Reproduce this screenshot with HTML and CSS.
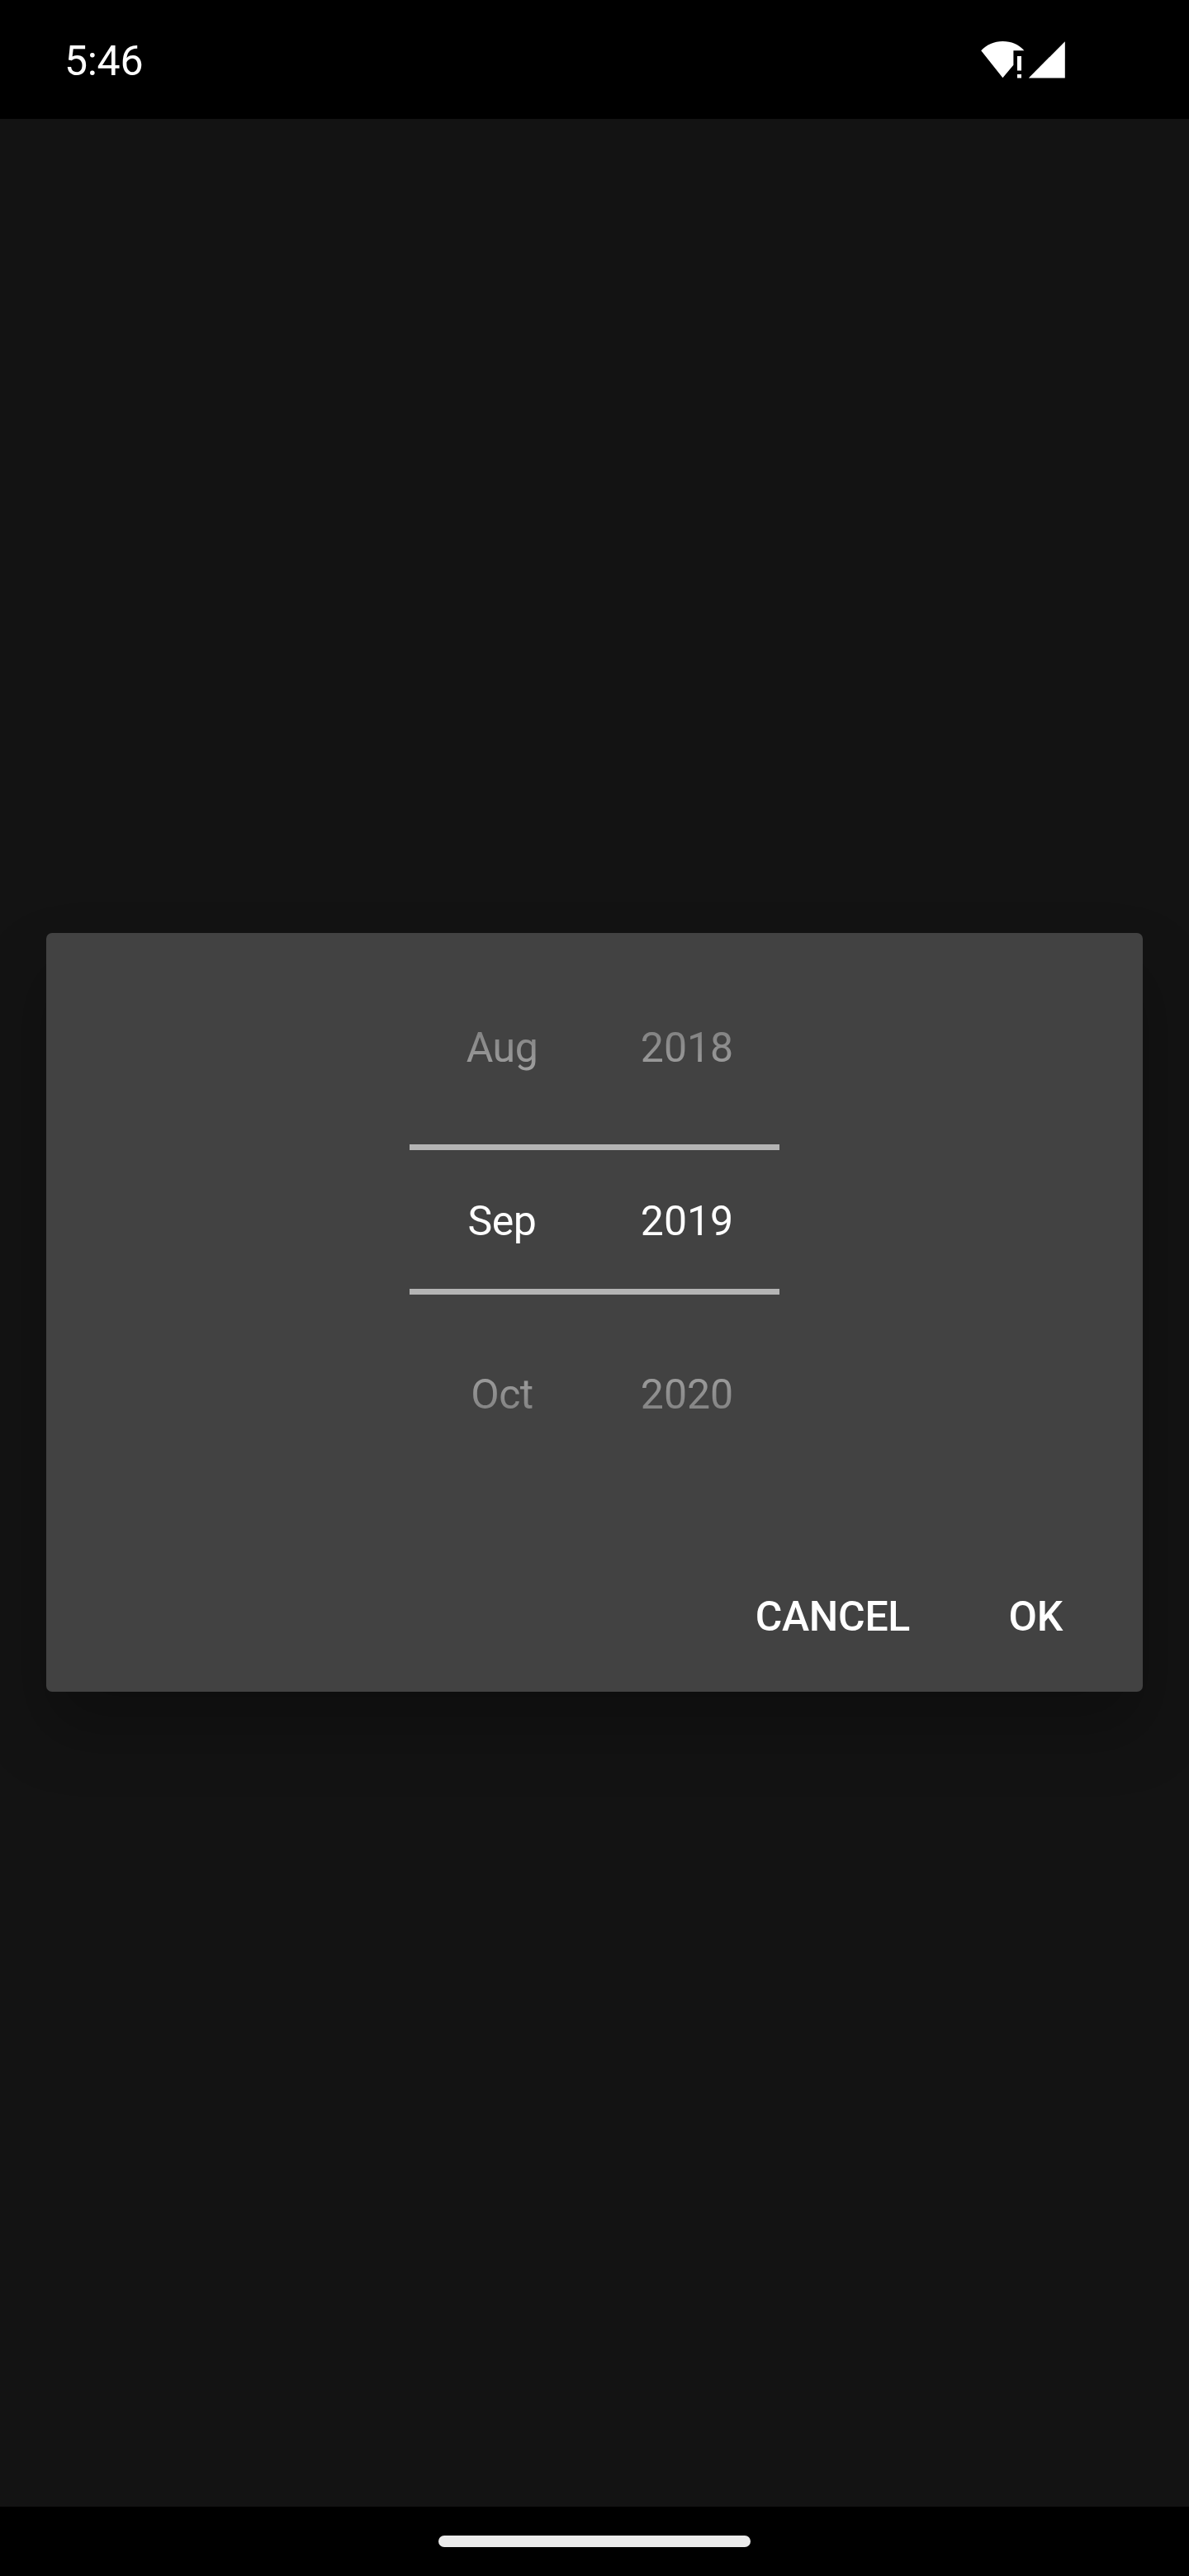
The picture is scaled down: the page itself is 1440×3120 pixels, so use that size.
FILE: index.html
```html
<!DOCTYPE html>
<html lang="en">
<head>
<meta charset="utf-8">
<title>Select month</title>
<link rel="stylesheet" href="styles.css">
</head>
<body>
<div class="screen">
  <header class="status-bar">
    <span class="clock">5:46</span>
    <svg class="status-icons" width="102" height="46" viewBox="0 0 102 46" fill="#fff">
      <path d="M0.2 12.2C7 5 16 1 26.4 1S45.5 4.6 52.4 12.2H39.4V29.8L26.4 45.3Z"/>
      <path d="M44 19h5v17.5h-5zM44 41h5v4.5h-5z"/>
      <path d="M57.8 45.5H101.8V1.2Z"/>
    </svg>
  </header>
  <main class="content">
    <section class="dialog">
      <div class="picker">
        <div class="wheel">
          <span class="month">Aug</span><span>2018</span>
          <span class="month">Sep</span><span>2019</span>
          <span class="month">Oct</span><span>2020</span>
        </div>
        <div class="selection"></div>
      </div>
      <div class="actions">
        <button class="action">CANCEL</button>
        <button class="action">OK</button>
      </div>
    </section>
  </main>
  <footer class="nav-bar"><div class="handle"></div></footer>
</div>
</body>
</html>
```
FILE: styles.css
```css
* { box-sizing: border-box; }
body {
  margin: 0;
  background: #000;
  color: #fff;
  font: 50px/58px Roboto, sans-serif;
}
.screen {
  width: 1440px;
  height: 3120px;
  display: flex;
  flex-direction: column;
}
.status-bar {
  height: 144px;
  padding: 45px 150px 0 78px;
  display: flex;
  justify-content: space-between;
  align-items: flex-start;
}
.clock { letter-spacing: -.3px; }
.status-icons { margin-top: 4px; }
.content {
  flex: 1;
  background: #131313;
  padding: 986px 56px 0;
  overflow: hidden;
}
.dialog {
  height: 919px;
  padding-top: 34px;
  border-radius: 7px;
  background: #424242;
  box-shadow: 0 45px 80px rgba(0, 0, 0, .25);
  display: flex;
  flex-direction: column;
  align-items: center;
}
.picker {
  position: relative;
  width: 448px;
  height: 630px;
}
.wheel {
  display: grid;
  grid-template-columns: 224px 224px;
  grid-auto-rows: 210px;
  place-items: center;
  -webkit-mask-image: linear-gradient(rgba(0, 0, 0, .07), #000 290px, #000 340px, rgba(0, 0, 0, .07));
  mask-image: linear-gradient(rgba(0, 0, 0, .07), #000 290px, #000 340px, rgba(0, 0, 0, .07));
}
.month { letter-spacing: -.5px; }
/* Rules that frame the selected row */
.selection {
  position: absolute;
  top: 222px;
  left: 0;
  width: 448px;
  height: 182px;
  border: solid #b4b4b4;
  border-width: 7px 0;
}
.actions {
  align-self: stretch;
  display: flex;
  justify-content: flex-end;
  gap: 119.5px;
  padding: 135px 97px 0 0;
}
.action {
  border: 0;
  padding: 0;
  background: none;
  color: inherit;
  font: 500 50px/58px Roboto, sans-serif;
  letter-spacing: -.3px;
}
.nav-bar {
  height: 84px;
  padding-top: 35px;
  display: flex;
  justify-content: center;
}
.handle {
  width: 378px;
  height: 14px;
  border-radius: 7px;
  background: #ebebeb;
}
```
